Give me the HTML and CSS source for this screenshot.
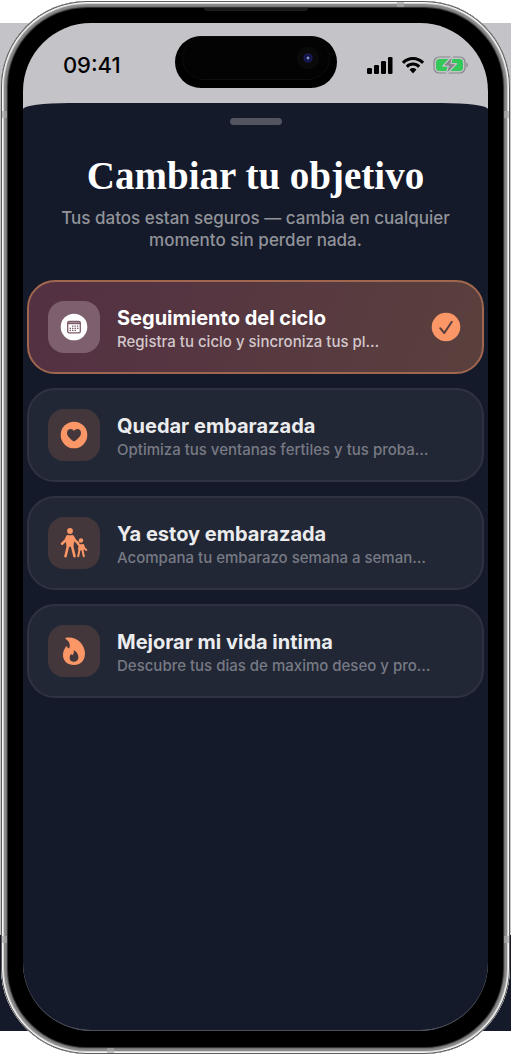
FILE: index.html
```html
<!DOCTYPE html>
<html lang="es">
<head>
<meta charset="utf-8">
<meta name="viewport" content="width=device-width, initial-scale=1">
<title>Cambiar tu objetivo</title>
<link rel="stylesheet" href="styles.css">
</head>
<body>
<div class="stage">
  <div class="phone">
    <span class="speaker"></span>
    <span class="band band-left band-high"></span>
    <span class="band band-right band-high"></span>
    <span class="band band-left band-low"></span>
    <span class="band band-right band-low"></span>
    <span class="band band-top"></span>
    <span class="band band-bottom"></span>
    <div class="screen">
      <header class="status">
        <time class="clock">09:41</time>
        <div class="island">
          <div class="island-inner"><span class="camera"></span></div>
        </div>
        <div class="indicators">
          <svg width="26" height="17" viewBox="0 0 26 17" aria-label="Cobertura">
            <rect x="0" y="11" width="5" height="6" rx="1.3"/>
            <rect x="7" y="8" width="5" height="9" rx="1.3"/>
            <rect x="14" y="4" width="5" height="13" rx="1.3"/>
            <rect x="21" y="0" width="4.500" height="17" rx="1.3"/>
          </svg>
          <svg width="22" height="17" viewBox="0 0 22 17" aria-label="Wi-Fi">
            <path d="M11 0C6.800 0 3 1.600.3 4.300c-.3.300-.3.600 0 .9l1.300 1.300c.3.300.6.300.9 0C4.700 4.300 7.700 3.100 11 3.100s6.300 1.200 8.500 3.400c.3.300.6.300.9 0l1.300-1.300c.3-.3.300-.6 0-.9C19 1.600 15.200 0 11 0z"/>
            <path d="M11 5.500c-2.700 0-5.100 1-6.900 2.700-.3.300-.3.600 0 .9l1.400 1.400c.3.300.6.300.9 0C7.600 9.300 9.200 8.600 11 8.600s3.400.7 4.600 1.900c.3.300.6.300.9 0l1.400-1.400c.3-.3.300-.6 0-.9C16.100 6.500 13.700 5.500 11 5.500z"/>
            <path d="M11 11c-1.200 0-2.300.4-3.100 1.200-.3.300-.3.600 0 .9l2.700 2.900c.3.300.5.300.8 0l2.700-2.900c.3-.3.300-.6 0-.9C13.300 11.400 12.200 11 11 11z"/>
          </svg>
          <svg width="36" height="20" viewBox="0 0 36 20" aria-label="Cargando">
            <rect x="1" y="2" width="31" height="16" rx="5" fill="none" stroke="#87878b" stroke-width="1.200"/>
            <path d="M33.500 7.500c1.600.5 1.600 4.500 0 5z" fill="#77777b"/>
            <rect x="3" y="4" width="27" height="12" rx="3.500" fill="#34c759"/>
            <path d="M19.500.8 10 11h5.500l-2.300 8.300L23.500 8.800H17.700z" fill="#87878b" stroke="#c4c3c8" stroke-width="1.400" stroke-linejoin="round"/>
            <path d="M18.700 2.800 11.300 10.500h5l-1.900 6.400 7.600-7.600h-5z" fill="#87878b"/>
          </svg>
        </div>
      </header>

      <main class="sheet">
        <div class="grabber"></div>
        <h1 class="title">Cambiar tu objetivo</h1>
        <p class="lead">Tus datos estan seguros — cambia en cualquier momento sin perder nada.</p>

        <div class="goals">
          <button class="goal goal-selected" type="button" aria-pressed="true">
            <span class="goal-icon">
              <svg width="28" height="28" viewBox="0 0 28 28" aria-hidden="true">
                <circle cx="14" cy="14" r="13.300" fill="#fff"/>
                <rect x="7.700" y="8.400" width="12.600" height="11.400" rx="1.600" fill="none" stroke="#7d5a69" stroke-width="1.300"/>
                <path d="M7.500 9.300h13v1.900h-13z" fill="#7d5a69"/>
                <path d="M12 13.200h6.500M9.600 15.300h8.900M9.600 17.400h6.600" stroke="#7d5a69" stroke-width="1.300" stroke-dasharray="1.400 1.050"/>
              </svg>
            </span>
            <span class="goal-text">
              <span class="goal-name">Seguimiento del ciclo</span>
              <span class="goal-note">Registra tu ciclo y sincroniza tus pl…</span>
            </span>
            <svg class="check" width="30" height="30" viewBox="0 0 30 30" aria-hidden="true">
              <circle cx="15" cy="15" r="14.300" fill="#fb9767"/>
              <path d="M9.200 16.200 13.300 21 20.800 9.800" fill="none" stroke="#593d3e" stroke-width="2" stroke-linecap="round" stroke-linejoin="round"/>
            </svg>
          </button>

          <button class="goal" type="button" aria-pressed="false">
            <span class="goal-icon">
              <svg width="28" height="28" viewBox="0 0 28 28" aria-hidden="true">
                <circle cx="14" cy="14" r="13.300" fill="#fb9767"/>
                <path d="M14 20.500C10.500 18 7 15.200 7 11.900 7 9.600 8.600 8 10.600 8c1.500 0 2.700.8 3.400 2.100C14.700 8.800 15.900 8 17.400 8c2 0 3.600 1.600 3.600 3.900 0 3.300-3.500 6.100-7 8.600z" fill="#43373c"/>
              </svg>
            </span>
            <span class="goal-text">
              <span class="goal-name">Quedar embarazada</span>
              <span class="goal-note">Optimiza tus ventanas fertiles y tus proba…</span>
            </span>
          </button>

          <button class="goal" type="button" aria-pressed="false">
            <span class="goal-icon">
              <svg width="28" height="32" viewBox="0 0 28 32" aria-hidden="true">
                <g fill="#fb9767" stroke="#fb9767" stroke-linecap="round" stroke-linejoin="round">
                  <circle cx="10" cy="4" r="2.900" stroke="none"/>
                  <path d="M7.400 9h5.200l1 3.500-.9 6.500H7.300l-.9-6.500z" stroke-width="1.600"/>
                  <path d="M7.400 9.500 5.500 13.500 2 16.700M12.600 9.500 15 13.500l3.200 2.500M8.200 18 5.500 29.300M11.800 18l2.700 11.300" fill="none" stroke-width="2.600"/>
                  <circle cx="21" cy="13.500" r="2.200" stroke="none"/>
                  <path d="M19.300 18h3.400l.5 4.500h-4.400z" stroke-width="1.500"/>
                  <path d="m19 18-1.700-2M23 18l1.300 3.200 2 1.700M19.500 23l-1.300 6.300M22.500 23l1.300 6.300" fill="none" stroke-width="2"/>
                </g>
              </svg>
            </span>
            <span class="goal-text">
              <span class="goal-name">Ya estoy embarazada</span>
              <span class="goal-note">Acompana tu embarazo semana a seman…</span>
            </span>
          </button>

          <button class="goal" type="button" aria-pressed="false">
            <span class="goal-icon">
              <svg width="24" height="30" viewBox="0 0 24 30" aria-hidden="true">
                <path fill="#fb9767" fill-rule="evenodd" d="M3.900 1.700C14.500 0 23 8.300 23 17.500 23 24.600 18.500 29 12 29 5.400 29 1 25 1 19c0-3.500 1.300-6 2.900-8.300.5-.7 1-.6 1.300.1.400 1 1 1.600 1.900 1.600 1.700-3.600.3-7-3.300-9.300-.6-.5-.6-1.200.1-1.400zM11.700 14.200c.8 3.300-.8 3.800-1.500 5.100-.5-.3-.8-.8-.9-1.500-1.200 1.200-1.700 2.700-1.700 4 0 2.500 1.700 4 4.300 4s4.500-1.600 4.500-4.500c0-3.400-2-6-4.700-7.100z"/>
              </svg>
            </span>
            <span class="goal-text">
              <span class="goal-name">Mejorar mi vida intima</span>
              <span class="goal-note">Descubre tus dias de maximo deseo y pro…</span>
            </span>
          </button>
        </div>
      </main>
    </div>
  </div>
</div>
</body>
</html>
```
FILE: styles.css
```css
* {
  box-sizing: border-box;
}

body {
  margin: 0;
  font-family: Inter, "Liberation Sans", sans-serif;
  background: #fff;
}

.stage {
  display: flex;
  min-height: 100vh;
  padding: 1px;
  background:
    linear-gradient(#fff 23px, transparent 23px),
    linear-gradient(to top, #fff 24px, #141a2a 24px, #141a2a 120px, #c4c3c8 120px);
}

/* Metal rim drawn as concentric rings around the black bezel */
.phone {
  position: relative;
  display: flex;
  flex: 1;
  padding: 22px 22px 23px;
  border-radius: 86px;
  background: #000;
  box-shadow:
    inset 0 0 0 1px #5c5a5a,
    inset 0 0 0 2px #f8f8f8,
    inset 0 0 0 3px #d2d2d2,
    inset 0 0 0 5px #8a8a8a,
    inset 0 0 0 6px #747474,
    inset 0 0 0 7px #333;
}

.speaker {
  position: absolute;
  top: 7px;
  left: 50%;
  width: 104px;
  height: 3px;
  margin-left: -52px;
  border-radius: 0 0 3px 3px;
  background: #1c1c1c;
}

.band {
  position: absolute;
  width: 5px;
  height: 7px;
  background: #aaa;
  opacity: .7;
}

.band-left { left: 1px; }
.band-right { right: 1px; }
.band-high { top: 110px; }
.band-low { bottom: 111px; }
.band-top,
.band-bottom {
  width: 7px;
  height: 5px;
}
.band-top { top: 1px; right: 106px; }
.band-bottom { bottom: 1px; left: 106px; }

.screen {
  display: flex;
  flex: 1;
  flex-direction: column;
  min-width: 0;
  overflow: hidden;
  border-bottom: 1px solid #4c505b;
  border-radius: 68px;
  background: #c4c3c8;
}

.status {
  display: grid;
  grid-template-columns: 1fr 162px 1fr;
  height: 80px;
  padding-top: 13px;
}

.clock {
  align-self: center;
  padding-right: 14px;
  color: #000;
  font-size: 22px;
  font-weight: 500;
  line-height: 28px;
  text-align: center;
  margin-bottom: 9px;
}

.island {
  height: 52px;
  padding: 0 7px;
  border-radius: 26px;
  background: #000;
}

.island-inner {
  display: flex;
  align-items: center;
  justify-content: flex-end;
  height: 44px;
  padding-right: 10px;
  border: 1px solid #0e0e0e;
  border-radius: 22px;
  background: #030303;
}

.camera {
  width: 22px;
  height: 22px;
  border-radius: 50%;
  background: radial-gradient(circle, #7f8fd0 1px, #0b0b2c 2px, #1d1d68 4px, #0a0a0a 5px);
}

.indicators {
  display: flex;
  align-items: center;
  justify-content: flex-end;
  gap: 9px;
  padding-right: 19px;
  margin-bottom: 9px;
}

.sheet {
  flex: 1;
  padding: 15px 4px 24px;
  border-radius: 46px 46px 0 0 / 6px 6px 0 0;
  background: #141a2a;
}

.grabber {
  width: 52px;
  height: 7px;
  margin: 0 auto;
  border-radius: 4px;
  background: #52555f;
}

.title {
  margin: 27px 0 0;
  color: #fff;
  font-family: "Liberation Serif", serif;
  font-size: 39px;
  font-weight: 700;
  line-height: 48px;
  text-align: center;
}

.lead {
  max-width: 420px;
  margin: 7px auto 0;
  color: #919399;
  font-size: 17px;
  font-weight: 500;
  line-height: 22px;
  text-align: center;
}

.goals {
  display: flex;
  flex-direction: column;
  gap: 14px;
  margin-top: 29px;
}

.goal {
  display: flex;
  align-items: center;
  width: 100%;
  min-height: 94px;
  padding: 0 21px 0 19px;
  border: 2px solid #2f3341;
  border-radius: 28px;
  color: #ebecee;
  background: #222735;
  font-family: inherit;
  text-align: left;
}

.goal-selected {
  border-color: #a1664e;
  color: #fff;
  background: linear-gradient(110deg, #533043, #5a403d);
}

.goal-icon {
  display: flex;
  flex: none;
  align-items: center;
  justify-content: center;
  width: 52px;
  height: 52px;
  margin-right: 17px;
  border-radius: 16px;
  background: #43373c;
}

.goal-selected .goal-icon {
  background: #7d5f6e;
}

.goal-text {
  display: flex;
  flex: 1;
  flex-direction: column;
  min-width: 0;
  padding-top: 3px;
}

.goal-name {
  font-size: 20px;
  font-weight: 700;
  line-height: 26px;
}

.goal-note {
  color: #777a84;
  font-size: 15px;
  font-weight: 500;
  line-height: 22px;
  white-space: nowrap;
}

.goal-selected .goal-note {
  color: #d3c8cb;
}

.check {
  flex: none;
}
```
